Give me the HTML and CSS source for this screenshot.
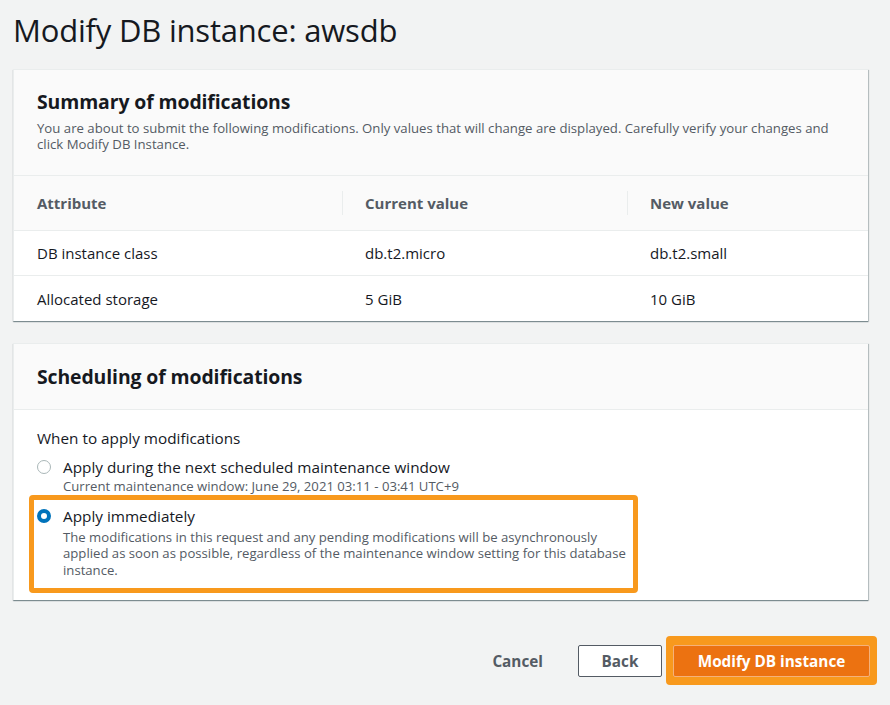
FILE: index.html
```html
<!DOCTYPE html>
<html>
<head>
<meta charset="utf-8">
<link rel="stylesheet" href="styles.css">
</head>
<body>
<div class="page">
  <h1 class="title">Modify DB instance: awsdb</h1>

  <section class="card">
    <div class="card-head">
      <h2 class="card-title">Summary of modifications</h2>
      <p class="card-desc">You are about to submit the following modifications. Only values that will change are displayed. Carefully verify your changes and click Modify DB Instance.</p>
    </div>
    <div class="table">
      <div class="row head">
        <div class="cell c1">Attribute</div>
        <div class="cell c2 sep">Current value</div>
        <div class="cell c3 sep">New value</div>
      </div>
      <div class="row">
        <div class="cell c1">DB instance class</div>
        <div class="cell c2">db.t2.micro</div>
        <div class="cell c3">db.t2.small</div>
      </div>
      <div class="row last">
        <div class="cell c1">Allocated storage</div>
        <div class="cell c2">5 GiB</div>
        <div class="cell c3">10 GiB</div>
      </div>
    </div>
  </section>

  <section class="card card2">
    <div class="card-head head2">
      <h2 class="card-title">Scheduling of modifications</h2>
    </div>
    <div class="card-body">
      <div class="field-label">When to apply modifications</div>
      <div class="option opt1">
        <span class="radio"></span>
        <div class="opt-text">
          <div class="opt-label">Apply during the next scheduled maintenance window</div>
          <div class="opt-desc">Current maintenance window: June 29, 2021 03:11 - 03:41 UTC+9</div>
        </div>
      </div>
      <div class="highlight">
        <div class="option">
          <span class="radio checked"></span>
          <div class="opt-text">
            <div class="opt-label">Apply immediately</div>
            <div class="opt-desc">The modifications in this request and any pending modifications will be asynchronously applied as soon as possible, regardless of the maintenance window setting for this database instance.</div>
          </div>
        </div>
      </div>
    </div>
  </section>

  <div class="actions">
    <button class="btn link">Cancel</button>
    <button class="btn normal">Back</button>
    <div class="btn-ring"><button class="btn primary">Modify DB instance</button></div>
  </div>
</div>
</body>
</html>
```

FILE: styles.css
```css
* { box-sizing: border-box; }
html, body { margin: 0; padding: 0; }
body {
  background: #f2f3f3;
  font-family: "Open Sans", "Noto Sans", sans-serif;
  color: #16191f;
  width: 890px;
  height: 705px;
  overflow: hidden;
}
.page {
  padding: 10px 22px 0 13px;
}
.title {
  margin: 0;
  font-size: 31px;
  font-weight: 400;
  line-height: 40px;
  letter-spacing: -0.2px;
  color: #16191f;
}
.card {
  margin-top: 19px;
  background: #fff;
  border-top: 1px solid #eaeded;
  border-left: 1px solid #eaeded;
  box-shadow: 0 1px 1px 0 rgba(0,28,36,0.35), 1px 1px 1px 0 rgba(0,28,36,0.2);
}
.card-head {
  background: #fafafa;
  padding: 20px 23px 23px;
  border-bottom: 1px solid #eaeded;
}
.card-title {
  margin: 0;
  font-size: 19.4px;
  font-weight: 700;
  line-height: 24px;
  letter-spacing: -0.1px;
}
.card-desc {
  margin: 6px 0 0;
  font-size: 13.2px;
  line-height: 16px;
  color: #545b64;
}
.row {
  display: flex;
  height: 45px;
  align-items: center;
  border-bottom: 1px solid #eaeded;
  font-size: 15px;
}
.row.last { border-bottom: none; }
.row.head {
  height: 55px;
  background: #fafafa;
  font-weight: 700;
  color: #545b64;
}
.cell {
  padding-left: 23px;
  position: relative;
  height: 100%;
  display: flex;
  align-items: center;
}
.c1 { width: 328px; }
.c2 { width: 285px; }
.c3 { flex: 1; }
.row.head .sep::before {
  content: "";
  position: absolute;
  left: 0;
  top: 15px;
  bottom: 15px;
  border-left: 1px solid #eaeded;
}

.card2 { margin-top: 22px; }
.head2 { padding: 21px 23px 20px; }
.card-body {
  padding: 18px 23px 7px;
}
.field-label {
  font-size: 15.3px;
  line-height: 20px;
}
.option {
  display: flex;
  align-items: flex-start;
  gap: 12px;
}
.opt1 { margin-top: 10px; }
.radio {
  width: 14px;
  height: 14px;
  border-radius: 50%;
  border: 1px solid #aab7b8;
  background: #fff;
  margin-top: 2px;
  flex: none;
}
.radio.checked {
  border: 4px solid #0073bb;
}
.opt-label {
  font-size: 15.3px;
  line-height: 18px;
}
.opt-desc {
  font-size: 13.15px;
  line-height: 16.5px;
  color: #545b64;
  margin-top: 4px;
}
.opt1 .opt-desc { margin-top: 2px; }
.highlight {
  margin: 0 0 0 -8px;
  width: 609px;
  border: 5px solid #f8991d;
  border-radius: 4px;
  padding: 7px 3px 10px 3px;
}
.highlight .opt-text { width: 570px; }

.actions {
  display: flex;
  justify-content: flex-end;
  align-items: center;
  margin-top: 36px;
  margin-right: -9px;
}
.btn {
  font-family: "Open Sans", "Noto Sans", sans-serif;
  font-weight: 700;
  font-size: 15.3px;
  height: 32px;
  border-radius: 2px;
  cursor: pointer;
}
.link {
  background: none;
  border: none;
  color: #545b64;
  padding: 0 20px;
  margin-right: 15px;
}
.normal {
  background: #fff;
  border: 1px solid #545b64;
  color: #545b64;
  width: 84px;
}
.btn-ring {
  margin-left: 4px;
  background: #f8991d;
  border-radius: 4px;
  padding: 7px;
  height: 49px;
  display: flex;
  align-items: center;
}
.primary {
  background: #ec7211;
  border: 1px solid #f5b17a;
  color: #fff;
  width: 197px;
}
```
